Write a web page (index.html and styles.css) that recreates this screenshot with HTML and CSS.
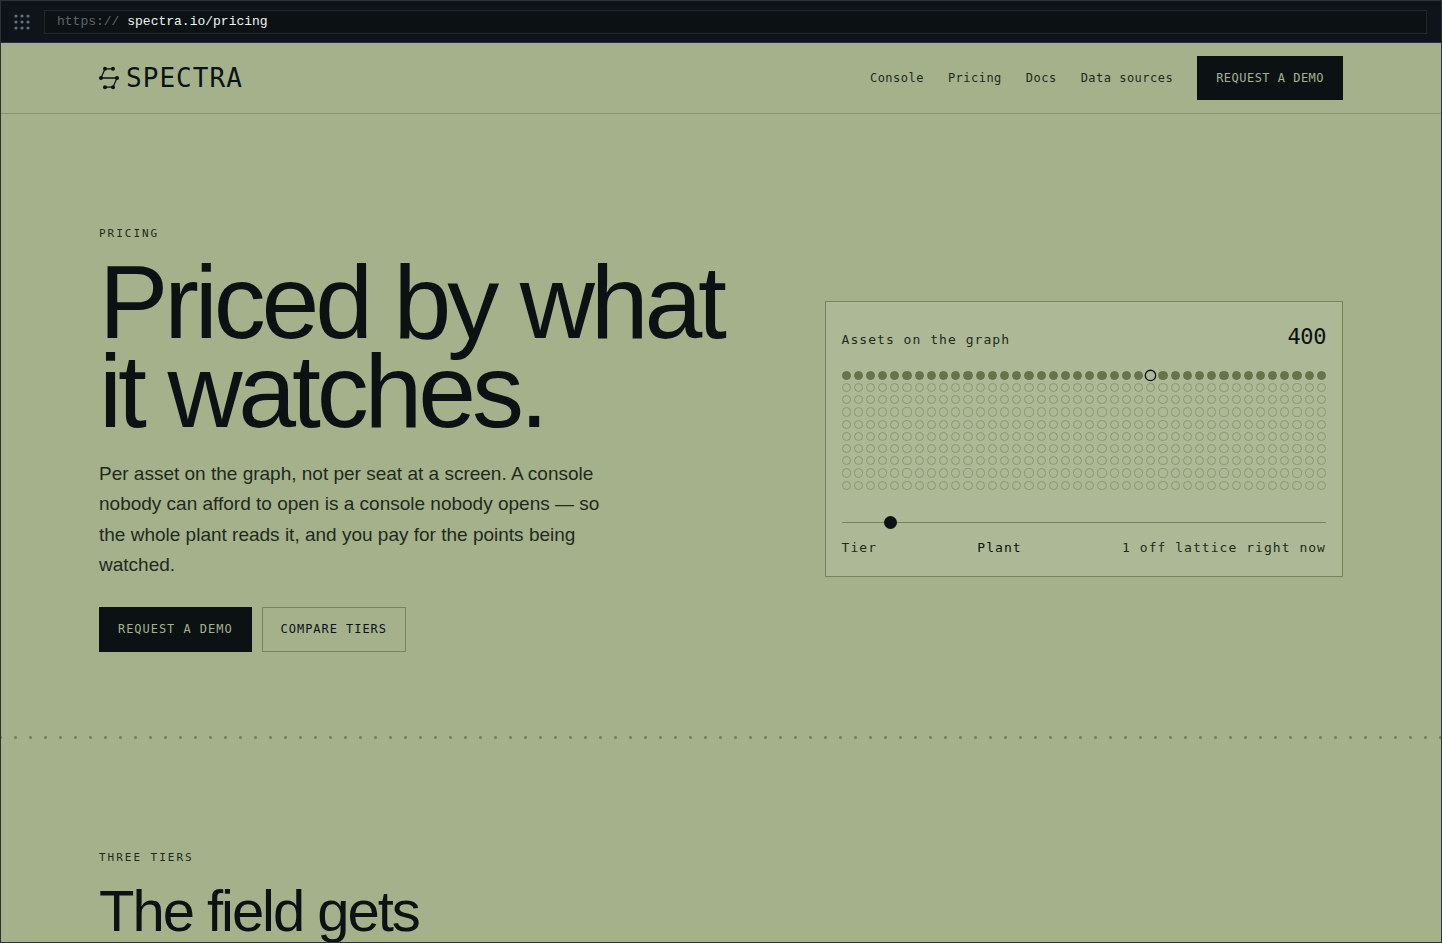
FILE: index.html
```html
<!DOCTYPE html>
<html lang="en">
<head>
<meta charset="utf-8">
<meta name="viewport" content="width=device-width, initial-scale=1">
<title>Spectra pricing</title>
<link rel="stylesheet" href="styles.css">
</head>
<body>
<div class="window">
  <div class="chrome">
    <svg class="chrome-grip" viewBox="0 0 16 16" aria-hidden="true">
      <g fill="currentColor">
        <circle cx="2" cy="2" r="1.600"/><circle cx="8" cy="2" r="1.600"/><circle cx="14" cy="2" r="1.600"/>
        <circle cx="2" cy="8" r="1.600"/><circle cx="8" cy="8" r="1.600"/><circle cx="14" cy="8" r="1.600"/>
        <circle cx="2" cy="14" r="1.600"/><circle cx="8" cy="14" r="1.600"/><circle cx="14" cy="14" r="1.600"/>
      </g>
    </svg>
    <div class="address"><span class="scheme">https://</span> <span>spectra.io/pricing</span></div>
  </div>
  <div class="page">
    <header class="site-header">
      <div class="container header-row">
        <a class="brand" href="#">
          <svg class="brand-mark" viewBox="0 0 20 24" aria-hidden="true">
            <path d="M14 2.800H6L2 12H18L14 21.200H6" fill="none" stroke="currentColor" stroke-width="1.300"/>
            <g fill="currentColor">
              <circle cx="6" cy="2.800" r="2"/><circle cx="14" cy="2.800" r="2"/>
              <circle cx="2" cy="12" r="2"/><circle cx="18" cy="12" r="2"/>
              <circle cx="6" cy="21.200" r="2"/><circle cx="14" cy="21.200" r="2"/>
            </g>
          </svg>
          <span>SPECTRA</span>
        </a>
        <nav class="nav">
          <a href="#">Console</a>
          <a href="#">Pricing</a>
          <a href="#">Docs</a>
          <a href="#">Data sources</a>
          <a class="button button-solid button-nav" href="#">REQUEST A DEMO</a>
        </nav>
      </div>
    </header>
    <main>
      <section class="hero container">
        <div class="hero-copy">
          <p class="eyebrow">PRICING</p>
          <h1>Priced by what it watches.</h1>
          <p class="lede">Per asset on the graph, not per seat at a screen. A console nobody can afford to open is a console nobody opens — so the whole plant reads it, and you pay for the points being watched.</p>
          <div class="actions">
            <a class="button button-solid" href="#">REQUEST A DEMO</a>
            <a class="button button-outline" href="#">COMPARE TIERS</a>
          </div>
        </div>
        <div class="meter">
          <div class="meter-head">
            <label for="assets">Assets on the graph</label>
            <output class="meter-count" for="assets">400</output>
          </div>
          <div class="lattice" id="lattice" aria-hidden="true"></div>
          <input class="slider" id="assets" type="range" min="40" max="4000" step="10" value="400">
          <div class="meter-foot">
            <span>Tier</span>
            <span class="tier">Plant</span>
            <span>1 off lattice right now</span>
          </div>
        </div>
      </section>
      <div class="dotted-rule"></div>
      <section class="tiers container">
        <p class="eyebrow">THREE TIERS</p>
        <h2>The field gets</h2>
      </section>
    </main>
  </div>
</div>
<script src="lattice.js"></script>
</body>
</html>
```
FILE: styles.css
```css
:root {
  --ink: #0c1114;
  --text: #1f2a1c;
  --field: #a5b18b;
  --panel: #adb996;
  --line: #74855a;
  --mono: "DejaVu Sans Mono", monospace;
  --sans: "Liberation Sans", Arial, sans-serif;
}

* {
  box-sizing: border-box;
}

body {
  margin: 0;
  color: var(--ink);
  font-family: var(--sans);
}

h1,
h2,
p {
  margin: 0;
  font-weight: 400;
}

a {
  color: inherit;
  text-decoration: none;
}

.window {
  display: flex;
  flex-direction: column;
  height: 100vh;
  overflow: hidden;
  border: 1px solid #2b3338;
  background: var(--field);
}

.chrome {
  display: flex;
  flex: none;
  align-items: center;
  gap: 14px;
  padding: 9px 14px 8px 13px;
  border-bottom: 1px solid #2b3338;
  background: #0e141a;
}

.chrome-grip {
  width: 16px;
  height: 16px;
  color: #66707a;
}

.address {
  flex: 1;
  padding: 0 12px;
  border: 1px solid #20282d;
  background: #0c1114;
  color: #f0f3f2;
  font: 13px/22px "Liberation Mono", monospace;
}

.scheme {
  color: #5d666d;
}

.page {
  flex: 1;
  min-height: 0;
  overflow: hidden;
}

.container {
  max-width: 1340px;
  margin: 0 auto;
  padding-left: 48px;
  padding-right: 48px;
}

.site-header {
  border-bottom: 1px solid #84956b;
}

.header-row {
  display: flex;
  align-items: center;
  justify-content: space-between;
  padding-top: 13px;
  padding-bottom: 13px;
}

.brand {
  display: flex;
  align-items: center;
  gap: 7px;
  font: 26px/32px var(--mono);
  letter-spacing: 0.04em;
}

.brand-mark {
  width: 20px;
  height: 24px;
}

.nav {
  display: flex;
  align-items: center;
  gap: 24px;
  color: var(--text);
  font: 12px/18px var(--mono);
  letter-spacing: 0.04em;
}

.button {
  padding: 13px 18px;
  border: 1px solid var(--ink);
  font: 12px/17px var(--mono);
  letter-spacing: 0.08em;
}

.button-solid {
  background: var(--ink);
  color: var(--field);
}

.button-outline {
  border-color: var(--line);
}

.button-nav {
  padding: 12px 18px;
  line-height: 18px;
  letter-spacing: 0.04em;
}

.hero {
  display: grid;
  grid-template-columns: 17fr 14fr;
  align-items: center;
  gap: 96px;
  padding-top: 112px;
  padding-bottom: 84px;
}

.eyebrow {
  color: var(--text);
  font: 11px/16px var(--mono);
  letter-spacing: 0.18em;
}

h1 {
  margin-top: 16px;
  font-size: 104px;
  line-height: 89px;
  letter-spacing: -0.04em;
}

.lede {
  max-width: 520px;
  margin-top: 23px;
  color: var(--text);
  font-size: 19px;
  line-height: 1.6;
}

.actions {
  display: flex;
  flex-wrap: wrap;
  gap: 10px;
  margin-top: 26px;
}

.meter {
  padding: 20px 16px 18px;
  border: 1px solid var(--line);
  background: var(--panel);
  color: var(--text);
  font: 13px/20px var(--mono);
  letter-spacing: 0.08em;
}

.meter-head,
.meter-foot {
  display: flex;
  align-items: baseline;
  justify-content: space-between;
}

.meter-count {
  color: var(--ink);
  font-size: 22px;
  line-height: 30px;
  letter-spacing: -0.02em;
}

.lattice {
  display: grid;
  grid-template-columns: repeat(40, 1fr);
  gap: 3px;
  margin-top: 19px;
}

.point {
  aspect-ratio: 1;
  border: 1px solid #879969;
  border-radius: 50%;
}

.point-on {
  border-color: #66734b;
  background: #66734b;
}

.point-off-lattice {
  border-color: var(--ink);
  background: var(--panel);
  transform: scale(1.3);
}

.slider {
  display: block;
  width: 100%;
  height: 13px;
  margin: 26px 0 9px;
  appearance: none;
  background: linear-gradient(var(--line), var(--line)) center / 100% 1px no-repeat;
}

.slider::-webkit-slider-thumb {
  width: 13px;
  height: 13px;
  appearance: none;
  border-radius: 50%;
  background: var(--ink);
}

.tier {
  color: var(--ink);
}

.dotted-rule {
  height: 3px;
  background: radial-gradient(circle, #74855a 1px, transparent 2px) -8px 0 / 15px 3px repeat-x;
}

.tiers {
  padding-top: 111px;
}

h2 {
  margin-top: 16px;
  font-size: 58px;
  line-height: 58px;
  letter-spacing: -0.035em;
}
```
FILE: lattice.js
```js
const COLUMNS = 40;
const ROWS = 10;
const WATCHED = 40;
const OFF_LATTICE = 25;

const lattice = document.getElementById("lattice");
for (let i = 0; i < COLUMNS * ROWS; i += 1) {
  const point = document.createElement("span");
  point.className = "point";
  if (i === OFF_LATTICE) {
    point.classList.add("point-off-lattice");
  } else if (i < WATCHED) {
    point.classList.add("point-on");
  }
  lattice.append(point);
}
```
